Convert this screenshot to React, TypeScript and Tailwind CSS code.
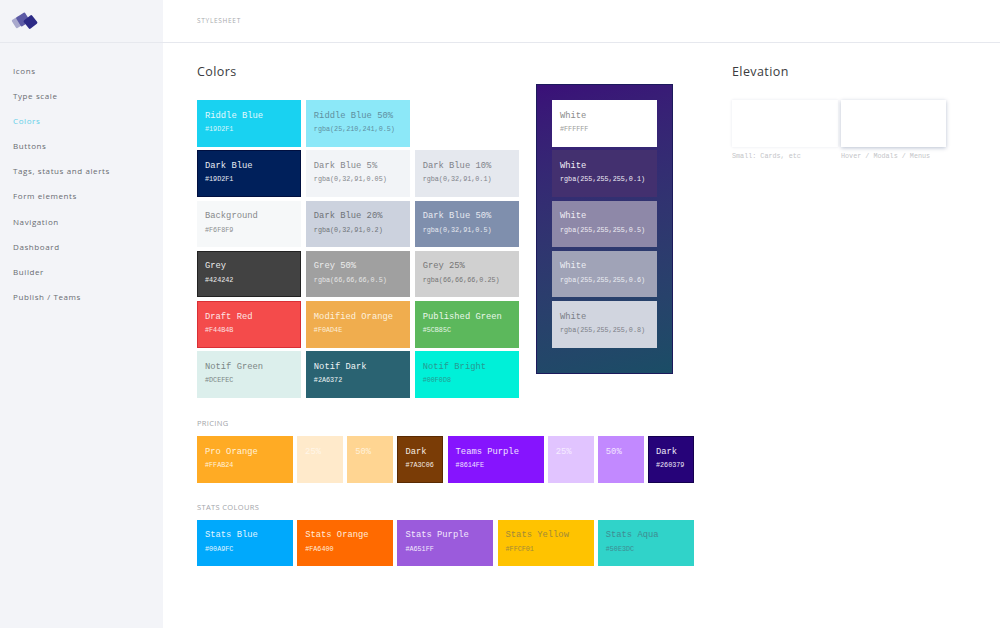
const navItems = [
  "Icons",
  "Type scale",
  "Colors",
  "Buttons",
  "Tags, status and alerts",
  "Form elements",
  "Navigation",
  "Dashboard",
  "Builder",
  "Publish / Teams",
];

type SwatchData = {
  name: string;
  code?: string;
  bg: string;
  nameColor: string;
  codeColor?: string;
  width?: string;
};

const mainSwatches: (SwatchData | null)[] = [
  { name: "Riddle Blue", code: "#19D2F1", bg: "bg-[#19d2f1]", nameColor: "text-[#e4f9fd]", codeColor: "text-[#d8f6fc]" },
  { name: "Riddle Blue 50%", code: "rgba(25,210,241,0.5)", bg: "bg-[#8ce8f8]", nameColor: "text-[#5f8f9f]", codeColor: "text-[#5f8f9f]" },
  null,
  { name: "Dark Blue", code: "#19D2F1", bg: "bg-[#00205b] shadow-[inset_0_0_0_1px_#000f3f]", nameColor: "text-[#e8ebf2]", codeColor: "text-[#e8ebf2]" },
  { name: "Dark Blue 5%", code: "rgba(0,32,91,0.05)", bg: "bg-[#f2f4f7]", nameColor: "text-[#85878c]", codeColor: "text-[#85878c]" },
  { name: "Dark Blue 10%", code: "rgba(0,32,91,0.1)", bg: "bg-[#e5e8ee]", nameColor: "text-[#7f828a]", codeColor: "text-[#7f828a]" },
  { name: "Background", code: "#F6F8F9", bg: "bg-[#f6f8f9]", nameColor: "text-[#87898b]", codeColor: "text-[#8c8e90]" },
  { name: "Dark Blue 20%", code: "rgba(0,32,91,0.2)", bg: "bg-[#ccd2de]", nameColor: "text-[#6f7278]", codeColor: "text-[#6f7278]" },
  { name: "Dark Blue 50%", code: "rgba(0,32,91,0.5)", bg: "bg-[#7f8fad]", nameColor: "text-[#e6e9f0]", codeColor: "text-[#e6e9f0]" },
  { name: "Grey", code: "#424242", bg: "bg-[#424242] shadow-[inset_0_0_0_1px_#222222]", nameColor: "text-[#ececec]", codeColor: "text-[#ececec]" },
  { name: "Grey 50%", code: "rgba(66,66,66,0.5)", bg: "bg-[#a0a0a0]", nameColor: "text-[#ececec]", codeColor: "text-[#e6e6e6]" },
  { name: "Grey 25%", code: "rgba(66,66,66,0.25)", bg: "bg-[#d0d0d0]", nameColor: "text-[#757575]", codeColor: "text-[#757575]" },
  { name: "Draft Red", code: "#F44B4B", bg: "bg-[#f44b4b] shadow-[inset_0_0_0_1px_#d92f35]", nameColor: "text-[#fde6e6]", codeColor: "text-[#fde0e0]" },
  { name: "Modified Orange", code: "#F0AD4E", bg: "bg-[#f0ad4e]", nameColor: "text-[#fdf1de]", codeColor: "text-[#fdeed8]" },
  { name: "Published Green", code: "#5CB85C", bg: "bg-[#5cb85c]", nameColor: "text-[#eaf7ea]", codeColor: "text-[#e6f5e6]" },
  { name: "Notif Green", code: "#DCEFEC", bg: "bg-[#dcefec]", nameColor: "text-[#7b8584]", codeColor: "text-[#7b8584]" },
  { name: "Notif Dark", code: "#2A6372", bg: "bg-[#2a6372]", nameColor: "text-[#eef4f5]", codeColor: "text-[#eef4f5]" },
  { name: "Notif Bright", code: "#00F0D8", bg: "bg-[#00f0d8]", nameColor: "text-[#269b92]", codeColor: "text-[#269b92]" },
];

const whiteSwatches: SwatchData[] = [
  { name: "White", code: "#FFFFFF", bg: "bg-white", nameColor: "text-[#8b8b8b]", codeColor: "text-[#9a9a9a]" },
  { name: "White", code: "rgba(255,255,255,0.1)", bg: "bg-[#43306f]", nameColor: "text-[#f0eef6]", codeColor: "text-[#f0eef6]" },
  { name: "White", code: "rgba(255,255,255,0.5)", bg: "bg-[#8e88a8]", nameColor: "text-[#eeedf3]", codeColor: "text-[#eeedf3]" },
  { name: "White", code: "rgba(255,255,255,0.6)", bg: "bg-[#a0a3b7]", nameColor: "text-[#eceef3]", codeColor: "text-[#eceef3]" },
  { name: "White", code: "rgba(255,255,255,0.8)", bg: "bg-[#d1d5df]", nameColor: "text-[#7c7f87]", codeColor: "text-[#7c7f87]" },
];

const pricingSwatches: SwatchData[] = [
  { name: "Pro Orange", code: "#FFAB24", bg: "bg-[#ffab24]", nameColor: "text-[#fff2dc]", codeColor: "text-[#fff2dc]", width: "w-[96px]" },
  { name: "25%", bg: "bg-[#ffeacb]", nameColor: "text-[#fff6e8]", width: "w-[46px]" },
  { name: "50%", bg: "bg-[#ffd592]", nameColor: "text-[#fff1da]", width: "w-[46px]" },
  { name: "Dark", code: "#7A3C06", bg: "bg-[#7a3c06] shadow-[inset_0_0_0_1px_#5a2a02]", nameColor: "text-[#f4ebe2]", codeColor: "text-[#f4ebe2]", width: "w-[46px]" },
  { name: "Teams Purple", code: "#8614FE", bg: "bg-[#8614fe]", nameColor: "text-[#f0e2ff]", codeColor: "text-[#f0e2ff]", width: "w-[96px]" },
  { name: "25%", bg: "bg-[#e1c4ff]", nameColor: "text-[#f6ecff]", width: "w-[46px]" },
  { name: "50%", bg: "bg-[#c289ff]", nameColor: "text-[#f3e6ff]", width: "w-[46px]" },
  { name: "Dark", code: "#260379", bg: "bg-[#260379] shadow-[inset_0_0_0_1px_#14004f]", nameColor: "text-[#eeeaf8]", codeColor: "text-[#eeeaf8]", width: "w-[46px]" },
];

const statsSwatches: SwatchData[] = [
  { name: "Stats Blue", code: "#00A9FC", bg: "bg-[#00a9fc]", nameColor: "text-[#e2f5ff]", codeColor: "text-[#e2f5ff]", width: "w-[96px]" },
  { name: "Stats Orange", code: "#FA6400", bg: "bg-[#ff6a00]", nameColor: "text-[#ffeadb]", codeColor: "text-[#ffeadb]", width: "w-[96px]" },
  { name: "Stats Purple", code: "#A651FF", bg: "bg-[#9b5bdc]", nameColor: "text-[#f3e9fc]", codeColor: "text-[#f3e9fc]", width: "w-[96px]" },
  { name: "Stats Yellow", code: "#FFCF01", bg: "bg-[#ffc300]", nameColor: "text-[#a08a3a]", codeColor: "text-[#a08a3a]", width: "w-[96px]" },
  { name: "Stats Aqua", code: "#50E3DC", bg: "bg-[#30d3c9]", nameColor: "text-[#3f8c92]", codeColor: "text-[#3f8c92]", width: "w-[96px]" },
];

function Swatch({ swatch }: { swatch: SwatchData }) {
  return (
    <div className={`h-[46.5px] px-2 pt-[10.5px] font-['Liberation_Mono',monospace] ${swatch.bg} ${swatch.width ?? ""}`}>
      <div className={`text-[8.8px] leading-[10px] whitespace-nowrap ${swatch.nameColor}`}>{swatch.name}</div>
      {swatch.code && (
        <div className={`mt-[3.5px] text-[6.75px] leading-[10px] whitespace-nowrap ${swatch.codeColor}`}>{swatch.code}</div>
      )}
    </div>
  );
}

function Logo() {
  return (
    <svg width="28" height="20" viewBox="0 0 28 20">
      <rect x="2.2" y="6.2" width="9.6" height="9.6" rx="1.2" transform="rotate(-32 7 11)" fill="#a9a9cd" />
      <rect x="6.7" y="3.2" width="10.6" height="10.6" rx="1.2" transform="rotate(-32 12 8.5)" fill="#5c5aa5" />
      <rect x="14.2" y="5.7" width="10.6" height="10.6" rx="1.4" transform="rotate(-38 19.5 11)" fill="#2c2a86" />
    </svg>
  );
}

function SectionLabel({ children }: { children: string }) {
  return (
    <div className="font-['Open_Sans',sans-serif] text-[7.5px] leading-[10px] tracking-[0.35px] text-[#a3a5aa]">{children}</div>
  );
}

export default function App() {
  return (
    <div className="flex h-[628px] w-[1000px] overflow-hidden bg-white font-['Open_Sans',sans-serif]">
      {/* Sidebar */}
      <aside className="w-[163px] shrink-0 bg-[#f3f4f8]">
        <div className="flex h-[43px] items-center border-b border-[#e6e8ee] pl-[11px]">
          <Logo />
        </div>
        <nav className="flex flex-col pt-[15px] pl-[13px]">
          {navItems.map((item) => (
            <a
              key={item}
              className={`h-[25.1px] text-[8px] leading-[25px] tracking-[0.6px] ${
                item === "Colors" ? "text-[#63cfe9]" : "text-[#686b71]"
              }`}
            >
              {item}
            </a>
          ))}
        </nav>
      </aside>

      <div className="flex-1">
        <header className="flex h-[43px] items-center border-b border-[#e6e8ee] pl-[34px]">
          <span className="text-[6.5px] tracking-[0.7px] text-[#a8aaae]">STYLESHEET</span>
        </header>

        <main className="flex pl-[34px]">
          {/* Colors */}
          <div className="w-[497px]">
            <div className="flex items-start">
              <section className="w-[322px]">
                <h2 className="mt-[21px] text-[12.5px] leading-[16px] tracking-[0.4px] text-[#3a3c40]">Colors</h2>
                <div className="mt-[20px] grid grid-cols-3 gap-x-[4.5px] gap-y-[3.8px]">
                  {mainSwatches.map((swatch, i) =>
                    swatch ? <Swatch key={i} swatch={swatch} /> : <div key={i} />
                  )}
                </div>
              </section>
              <section className="mt-[41px] ml-[17px] flex h-[290px] w-[137px] flex-col gap-[3.8px] border border-[#1c1a5c] bg-linear-165 from-[#3a0f78] to-[#1a4d66] px-[15px] pt-[15px]">
                {whiteSwatches.map((swatch) => (
                  <Swatch key={swatch.code} swatch={swatch} />
                ))}
              </section>
            </div>

            <div className="mt-[20.5px]">
              <SectionLabel>PRICING</SectionLabel>
              <div className="mt-[8px] flex gap-[4.2px]">
                {pricingSwatches.map((swatch, i) => (
                  <Swatch key={i} swatch={swatch} />
                ))}
              </div>
            </div>

            <div className="mt-[19px]">
              <SectionLabel>STATS COLOURS</SectionLabel>
              <div className="mt-[8px] flex gap-[4.2px]">
                {statsSwatches.map((swatch) => (
                  <Swatch key={swatch.name} swatch={swatch} />
                ))}
              </div>
            </div>
          </div>

          {/* Elevation */}
          <section className="ml-[38px]">
            <h2 className="mt-[21px] text-[12.5px] leading-[16px] tracking-[0.4px] text-[#3a3c40]">Elevation</h2>
            <div className="mt-[20px] flex gap-[3px] font-['Liberation_Mono',monospace] text-[6.75px] leading-[10px] text-[#c4c5c8]">
              <div className="w-[106px]">
                <div className="h-[46.5px] bg-white shadow-[0_0_3px_rgba(0,32,91,0.1)]" />
                <div className="mt-[4px]">Small: Cards, etc</div>
              </div>
              <div className="w-[105px]">
                <div className="h-[46.5px] bg-white shadow-[0_1px_4px_rgba(0,32,91,0.28)]" />
                <div className="mt-[4px] whitespace-nowrap">Hover / Modals / Menus</div>
              </div>
            </div>
          </section>
        </main>
      </div>
    </div>
  );
}
